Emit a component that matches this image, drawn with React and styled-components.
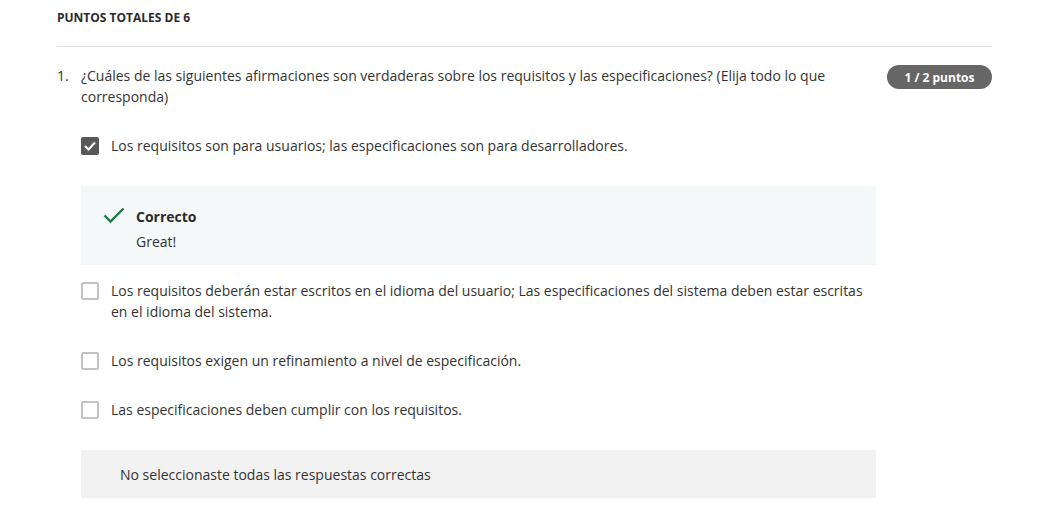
import styled, { createGlobalStyle } from "styled-components";

const GlobalStyle = createGlobalStyle`
   body {
      margin: 0;
      background: #fff;
      font-family: "Open Sans", "Liberation Sans", sans-serif;
      color: #333;
   }
`;

const Page = styled.div`
   padding: 0 48px 0 57px;
`;

const Header = styled.div`
   padding: 10px 0 20px;
   border-bottom: 1px solid #e1e1e1;
   font-size: 12px;
   line-height: 16px;
   font-weight: 700;
   text-transform: uppercase;
   color: #2b2b2b;
`;

const QuestionRow = styled.div`
   display: flex;
   align-items: flex-start;
   margin-top: 18px;
`;

const Number = styled.span`
   width: 24px;
   flex-shrink: 0;
   font-size: 14px;
   line-height: 21px;
`;

const QuestionText = styled.div`
   flex: 1;
   font-size: 14px;
   line-height: 21px;
   padding-right: 16px;
`;

const Badge = styled.div`
   width: 105px;
   height: 24px;
   border-radius: 12px;
   background: #666;
   color: #fff;
   font-size: 12px;
   font-weight: 700;
   display: flex;
   align-items: center;
   justify-content: center;
   flex-shrink: 0;
`;

const Options = styled.div`
   display: flex;
   flex-direction: column;
   margin: 28px 0 0 24px;
   width: 795px;
`;

const Option = styled.label`
   display: flex;
   align-items: flex-start;
   font-size: 14px;
   line-height: 21px;
   margin-bottom: 28px;
`;

const Box = styled.span`
   width: 18px;
   height: 18px;
   margin-top: 1.5px;
   margin-right: 12px;
   flex-shrink: 0;
   box-sizing: border-box;
   border-radius: 2px;
   display: flex;
   align-items: center;
   justify-content: center;
   background: ${(p) => (p.checked ? "#585858" : "#fff")};
   border: ${(p) => (p.checked ? "none" : "2px solid #c2c2c2")};
`;

const Feedback = styled.div`
   display: flex;
   background: #f5f8f8;
   padding: 20px 22px 13px;
   margin: 2px 0 15px;
`;

const FeedbackIcon = styled.div`
   width: 33px;
   flex-shrink: 0;
   padding-top: 1px;
`;

const FeedbackBody = styled.div`
   font-size: 14px;
   line-height: 21px;
`;

const FeedbackTitle = styled.div`
   font-weight: 700;
   color: #2b2b2b;
`;

const FeedbackText = styled.div`
   margin-top: 4px;
`;

const Summary = styled.div`
   height: 48px;
   display: flex;
   align-items: center;
   padding: 0 39px;
   background: #f2f2f2;
   font-size: 14px;
   margin-top: 2px;
`;

const Check = ({ checked }) => (
   <Box checked={checked}>
      {checked && (
         <svg width="12" height="10" viewBox="0 0 12 10">
            <polyline points="1,5 4.5,8.5 11,1.5" fill="none" stroke="#fff" strokeWidth="2" />
         </svg>
      )}
   </Box>
);

const App = () => {
   return (
      <Page>
         <GlobalStyle />
         <Header>Puntos totales de 6</Header>
         <QuestionRow>
            <Number>1.</Number>
            <QuestionText>
               ¿Cuáles de las siguientes afirmaciones son verdaderas sobre los requisitos y las especificaciones? (Elija todo lo que corresponda)
            </QuestionText>
            <Badge>1 / 2 puntos</Badge>
         </QuestionRow>
         <Options>
            <Option>
               <Check checked />
               <span>Los requisitos son para usuarios; las especificaciones son para desarrolladores.</span>
            </Option>
            <Feedback>
               <FeedbackIcon>
                  <svg width="22" height="17" viewBox="0 0 22 17">
                     <polyline points="1.5,8.5 7.5,14.5 20.5,1.5" fill="none" stroke="#1d7a4c" strokeWidth="2.4" />
                  </svg>
               </FeedbackIcon>
               <FeedbackBody>
                  <FeedbackTitle>Correcto</FeedbackTitle>
                  <FeedbackText>Great!</FeedbackText>
               </FeedbackBody>
            </Feedback>
            <Option>
               <Check />
               <span>Los requisitos deberán estar escritos en el idioma del usuario; Las especificaciones del sistema deben estar escritas en el idioma del sistema.</span>
            </Option>
            <Option>
               <Check />
               <span>Los requisitos exigen un refinamiento a nivel de especificación.</span>
            </Option>
            <Option>
               <Check />
               <span>Las especificaciones deben cumplir con los requisitos.</span>
            </Option>
            <Summary>No seleccionaste todas las respuestas correctas</Summary>
         </Options>
      </Page>
   );
};

export default App;
